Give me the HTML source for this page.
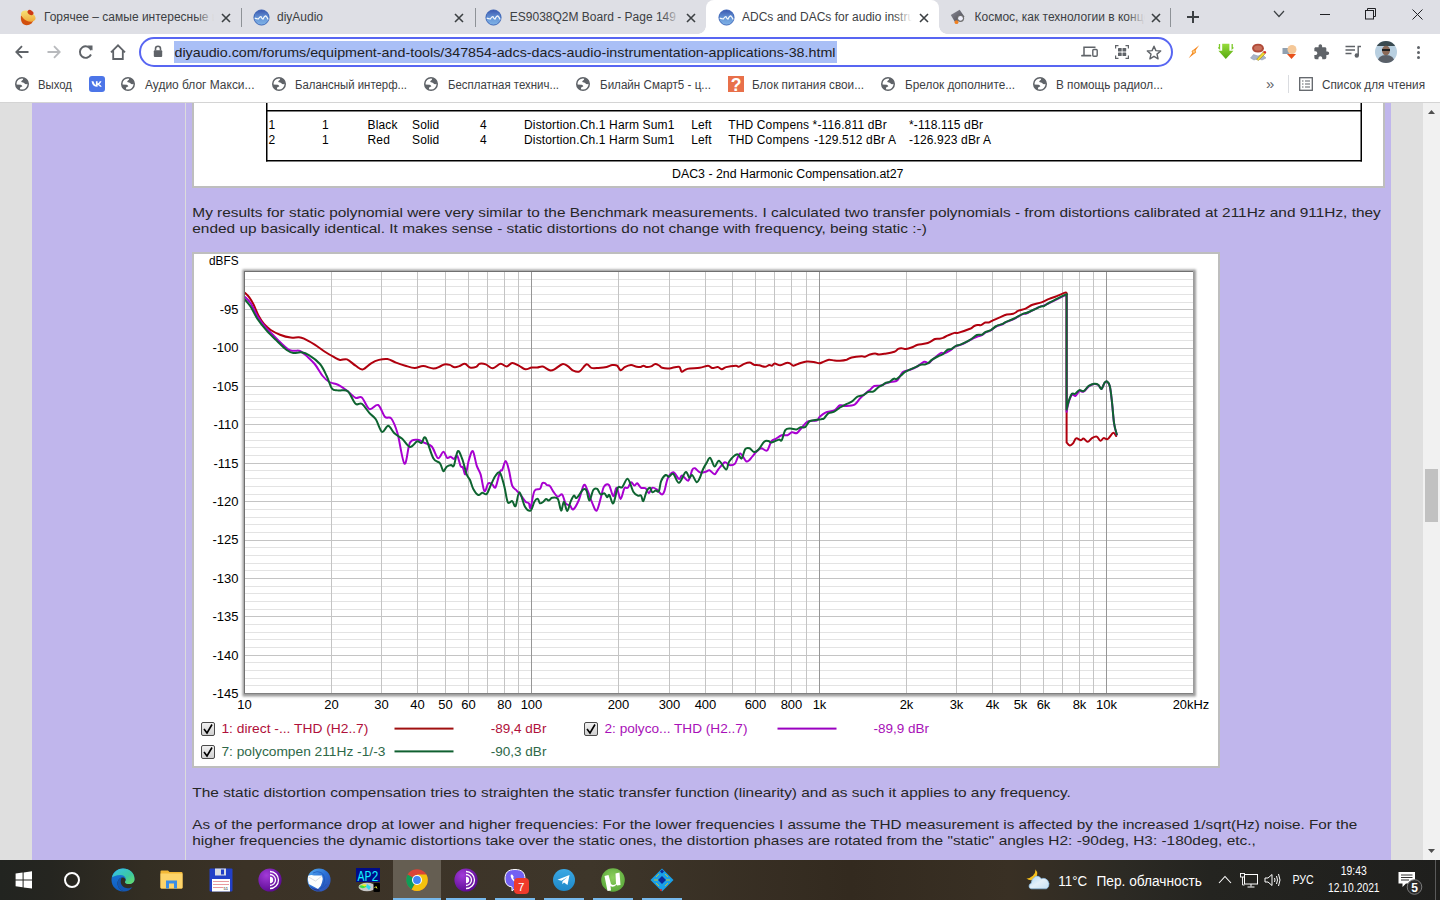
<!DOCTYPE html>
<html><head><meta charset="utf-8"><style>
*{margin:0;padding:0;box-sizing:border-box}
html,body{width:1440px;height:900px;overflow:hidden;background:#fff;font-family:"Liberation Sans",sans-serif}
.abs{position:absolute}
#ov{position:absolute;left:0;top:0}
#ov text{font-family:"Liberation Sans",sans-serif;white-space:pre}
</style></head><body>
<div class="abs" style="left:0;top:0;width:1440px;height:34px;background:#dedfe5"></div>
<div class="abs" style="left:0;top:34px;width:1440px;height:68px;background:#fff"></div>
<div class="abs" style="left:8.5px;top:0;width:233px;height:34px">
<svg class="abs" style="left:11px;top:8.5px" width="17" height="17" viewBox="0 0 17 17"><defs><linearGradient id="cf" x1="0" y1="0" x2="1" y2="1"><stop offset="0" stop-color="#f8ec80"/><stop offset="1" stop-color="#eea030"/></linearGradient></defs><path d="M1 6.5Q0.3 13 3.5 15.3Q7.5 17.3 11.5 14.5L13.5 11.5Z" fill="#d2500e"/><ellipse cx="8.3" cy="7.2" rx="7.8" ry="4.8" transform="rotate(28 8.3 7.2)" fill="url(#cf)"/><ellipse cx="10.5" cy="3.6" rx="3.2" ry="2.3" transform="rotate(32 10.5 3.6)" fill="#cc3a14"/></svg>
<div class="abs" style="left:35.5px;top:7px;width:170px;height:20px;overflow:hidden;font-size:12px;line-height:20px;white-space:nowrap;color:#3c4043">Горячее – самые интересные и</div>
<div class="abs" style="left:187.5px;top:7px;width:18px;height:20px;background:linear-gradient(90deg,rgba(222,225,230,0),#dedfe5)"></div>
<svg class="abs" style="left:212px;top:13px" width="10" height="10" viewBox="0 0 10 10"><path d="M1 1L9 9M9 1L1 9" stroke="#3c4043" stroke-width="1.6"/></svg>
</div>
<div class="abs" style="left:241.5px;top:0;width:233px;height:34px">
<svg class="abs" style="left:11px;top:8.5px" width="17" height="17" viewBox="0 0 17 17"><defs><linearGradient id="g1" x1="0" y1="0" x2="0" y2="1"><stop offset="0" stop-color="#3a58b0"/><stop offset="0.55" stop-color="#6898d8"/><stop offset="1" stop-color="#80b2e6"/></linearGradient></defs><circle cx="8.5" cy="8.5" r="7.6" fill="url(#g1)" stroke="#2a56ae" stroke-width="0.8"/><path d="M1.7 9.1Q3.5 9.6 5.3 10Q6.8 7.4 7.9 7.6Q9 10.2 9.95 10.2Q11.5 6.6 12.8 6.8Q14 8 15.2 10.5" stroke="#f4f8fc" stroke-width="1.2" fill="none"/></svg>
<div class="abs" style="left:35.5px;top:7px;width:170px;height:20px;overflow:hidden;font-size:12px;line-height:20px;white-space:nowrap;color:#3c4043">diyAudio</div>
<svg class="abs" style="left:212px;top:13px" width="10" height="10" viewBox="0 0 10 10"><path d="M1 1L9 9M9 1L1 9" stroke="#3c4043" stroke-width="1.6"/></svg>
</div>
<div class="abs" style="left:474.3px;top:0;width:233px;height:34px">
<svg class="abs" style="left:11px;top:8.5px" width="17" height="17" viewBox="0 0 17 17"><defs><linearGradient id="g2" x1="0" y1="0" x2="0" y2="1"><stop offset="0" stop-color="#3a58b0"/><stop offset="0.55" stop-color="#6898d8"/><stop offset="1" stop-color="#80b2e6"/></linearGradient></defs><circle cx="8.5" cy="8.5" r="7.6" fill="url(#g2)" stroke="#2a56ae" stroke-width="0.8"/><path d="M1.7 9.1Q3.5 9.6 5.3 10Q6.8 7.4 7.9 7.6Q9 10.2 9.95 10.2Q11.5 6.6 12.8 6.8Q14 8 15.2 10.5" stroke="#f4f8fc" stroke-width="1.2" fill="none"/></svg>
<div class="abs" style="left:35.5px;top:7px;width:170px;height:20px;overflow:hidden;font-size:12px;line-height:20px;white-space:nowrap;color:#3c4043">ES9038Q2M Board - Page 149 - diyAudio</div>
<div class="abs" style="left:187.5px;top:7px;width:18px;height:20px;background:linear-gradient(90deg,rgba(222,225,230,0),#dedfe5)"></div>
<svg class="abs" style="left:212px;top:13px" width="10" height="10" viewBox="0 0 10 10"><path d="M1 1L9 9M9 1L1 9" stroke="#3c4043" stroke-width="1.6"/></svg>
</div>
<div class="abs" style="left:706.5px;top:0;width:233px;height:34px">
<div class="abs" style="left:-0.5px;top:0;width:233px;height:34px;background:#fff;border-radius:8px 8px 0 0"></div>
<div class="abs" style="left:-8.5px;top:26px;width:8px;height:8px;background:radial-gradient(circle at 0 0,#dedfe5 7.5px,#fff 8px)"></div>
<div class="abs" style="left:232.5px;top:26px;width:8px;height:8px;background:radial-gradient(circle at 100% 0,#dedfe5 7.5px,#fff 8px)"></div>
<svg class="abs" style="left:11px;top:8.5px" width="17" height="17" viewBox="0 0 17 17"><defs><linearGradient id="g3" x1="0" y1="0" x2="0" y2="1"><stop offset="0" stop-color="#3a58b0"/><stop offset="0.55" stop-color="#6898d8"/><stop offset="1" stop-color="#80b2e6"/></linearGradient></defs><circle cx="8.5" cy="8.5" r="7.6" fill="url(#g3)" stroke="#2a56ae" stroke-width="0.8"/><path d="M1.7 9.1Q3.5 9.6 5.3 10Q6.8 7.4 7.9 7.6Q9 10.2 9.95 10.2Q11.5 6.6 12.8 6.8Q14 8 15.2 10.5" stroke="#f4f8fc" stroke-width="1.2" fill="none"/></svg>
<div class="abs" style="left:35.5px;top:7px;width:170px;height:20px;overflow:hidden;font-size:12px;line-height:20px;white-space:nowrap;color:#3c4043">ADCs and DACs for audio instrumentation</div>
<div class="abs" style="left:187.5px;top:7px;width:18px;height:20px;background:linear-gradient(90deg,rgba(255,255,255,0),#fff)"></div>
<svg class="abs" style="left:212px;top:13px" width="10" height="10" viewBox="0 0 10 10"><path d="M1 1L9 9M9 1L1 9" stroke="#3c4043" stroke-width="1.6"/></svg>
</div>
<div class="abs" style="left:939.0px;top:0;width:233px;height:34px">
<svg class="abs" style="left:11px;top:9px" width="17" height="17" viewBox="0 0 17 17"><defs><linearGradient id="kf" x1="0" y1="0" x2="1" y2="1"><stop offset="0" stop-color="#8a8a94"/><stop offset="1" stop-color="#44444e"/></linearGradient></defs><path d="M0.8 6L9.6 0.8L14.5 7.8L5.5 14Z" fill="url(#kf)"/><circle cx="10.5" cy="9.3" r="3.6" fill="#707070"/><circle cx="10.5" cy="9.3" r="2.4" fill="#eeeefa"/><circle cx="6.5" cy="13.2" r="1.9" fill="#f08020"/></svg>
<div class="abs" style="left:35.5px;top:7px;width:170px;height:20px;overflow:hidden;font-size:12px;line-height:20px;white-space:nowrap;color:#3c4043">Космос, как технологии в конце</div>
<div class="abs" style="left:187.5px;top:7px;width:18px;height:20px;background:linear-gradient(90deg,rgba(222,225,230,0),#dedfe5)"></div>
<svg class="abs" style="left:212px;top:13px" width="10" height="10" viewBox="0 0 10 10"><path d="M1 1L9 9M9 1L1 9" stroke="#3c4043" stroke-width="1.6"/></svg>
</div>
<div class="abs" style="left:241px;top:8px;width:1px;height:19px;background:#8e9297"></div>
<div class="abs" style="left:475px;top:8px;width:1px;height:19px;background:#8e9297"></div>
<div class="abs" style="left:1170px;top:8px;width:1px;height:19px;background:#8e9297"></div>
<svg class="abs" style="left:1186px;top:10px" width="14" height="14" viewBox="0 0 14 14"><path d="M7 1V13M1 7H13" stroke="#3c4043" stroke-width="2"/></svg>
<svg class="abs" style="left:1273px;top:10px" width="12" height="8" viewBox="0 0 12 8"><path d="M1 1L6 6.5L11 1" stroke="#3c4043" stroke-width="1.2" fill="none"/></svg>
<div class="abs" style="left:1320px;top:14px;width:10px;height:1px;background:#202124"></div>
<svg class="abs" style="left:1365px;top:8px" width="12" height="12" viewBox="0 0 12 12"><rect x="0.5" y="2.5" width="8" height="8.5" fill="none" stroke="#202124" stroke-width="1"/><path d="M2.5 2.5V0.5H10.5V8.5H8.5" fill="none" stroke="#202124" stroke-width="1"/></svg>
<svg class="abs" style="left:1412px;top:8.5px" width="11" height="11" viewBox="0 0 11 11"><path d="M0.5 0.5L10.5 10.5M10.5 0.5L0.5 10.5" stroke="#202124" stroke-width="1"/></svg>
<svg class="abs" style="left:15px;top:45px" width="14" height="14" viewBox="0 0 14 14"><path d="M13.5 7H1.5M7 1.2L1.3 7L7 12.8" stroke="#5f6368" stroke-width="1.8" fill="none"/></svg>
<svg class="abs" style="left:47px;top:45px" width="14" height="14" viewBox="0 0 14 14"><path d="M0.5 7H12.5M7 1.2L12.7 7L7 12.8" stroke="#b8babd" stroke-width="1.8" fill="none"/></svg>
<svg class="abs" style="left:78px;top:44px" width="16" height="16" viewBox="0 0 16 16"><path d="M13.2 6.2A5.8 5.8 0 1 0 13 10.5" stroke="#5f6368" stroke-width="1.9" fill="none"/><path d="M9.5 1.5L14.5 1.5L14.5 6.5Z" fill="#5f6368"/></svg>
<svg class="abs" style="left:110px;top:44px" width="16" height="16" viewBox="0 0 16 16"><path d="M1 8.3L8 1.3L15 8.3M3.2 6.5V15H12.8V6.5" stroke="#5f6368" stroke-width="1.8" fill="none" stroke-linejoin="miter"/></svg>
<div class="abs" style="left:139px;top:37px;width:1034px;height:30px;border:2px solid #5866f2;border-radius:15px;background:#fff"></div>
<svg class="abs" style="left:153px;top:45px" width="10" height="13" viewBox="0 0 10 13"><path d="M2.5 5.5V3.8A2.5 2.5 0 0 1 7.5 3.8V5.5" stroke="#5f6368" stroke-width="1.6" fill="none"/><rect x="0.8" y="5.3" width="8.4" height="6.8" rx="1" fill="#5f6368"/></svg>
<div class="abs" style="left:174px;top:41px;width:663px;height:22px;background:#a9bff6"></div>
<svg class="abs" style="left:1081px;top:46px" width="17" height="11" viewBox="0 0 17 11"><path d="M3 9V1.2H14.5" stroke="#5f6368" stroke-width="1.5" fill="none"/><path d="M1 9.7H9.5" stroke="#5f6368" stroke-width="1.8" stroke-linecap="round"/><rect x="11.8" y="3.5" width="4.4" height="6.8" rx="1" stroke="#5f6368" stroke-width="1.4" fill="none"/></svg>
<svg class="abs" style="left:1115px;top:45px" width="14" height="14" viewBox="0 0 14 14"><path d="M0.6 3.5V0.6H3.5M10.5 0.6H13.4V3.5M13.4 10.5V13.4H10.5M3.5 13.4H0.6V10.5" stroke="#5f6368" stroke-width="1.2" fill="none"/><rect x="3" y="3" width="3.7" height="3.6" rx="0.5" fill="#5f6368"/><rect x="7.5" y="3" width="3.7" height="3.6" rx="0.5" fill="#5f6368"/><rect x="3" y="7.5" width="3.7" height="3.6" rx="0.5" fill="#5f6368"/><rect x="7.5" y="7.5" width="3.7" height="3.6" rx="0.5" fill="#5f6368"/></svg>
<svg class="abs" style="left:1146px;top:45px" width="16" height="15" viewBox="0 0 16 15"><path d="M8 1.2L9.9 5.6L14.7 6L11 9.1L12.1 13.8L8 11.3L3.9 13.8L5 9.1L1.3 6L6.1 5.6Z" stroke="#5f6368" stroke-width="1.4" fill="none" stroke-linejoin="round"/></svg>
<svg class="abs" style="left:1188px;top:45px" width="12" height="14" viewBox="0 0 12 14"><path d="M11.2 0.3L7.5 5.5L8.2 7.2L0.6 13.2L4.2 8L3.6 6.3Z" fill="#f5871f"/><circle cx="5.9" cy="6.7" r="1.9" fill="#f8a848"/><circle cx="5.9" cy="6.7" r="0.9" fill="#fbd090"/></svg>
<svg class="abs" style="left:1217px;top:43px" width="18" height="17" viewBox="0 0 18 17"><defs><linearGradient id="ga" x1="0" y1="0" x2="0" y2="1"><stop offset="0" stop-color="#96dc3a"/><stop offset="1" stop-color="#56a810"/></linearGradient></defs><path d="M5.2 0.8H12.4V7.8H16.4L8.8 16L1.4 7.8H5.2Z" fill="url(#ga)"/><path d="M2.5 1V5.5L1.3 4.5M15.2 1V5.5L16.4 4.5" stroke="#7cc828" stroke-width="1.3" fill="none"/></svg>
<svg class="abs" style="left:1250px;top:43px" width="17" height="18" viewBox="0 0 17 18"><path d="M0.5 15L3.5 11.5L8 13L12.5 11.5L16 15L12 17L8 15.5L4 17Z" fill="#a8b4c8" stroke="#8894a8" stroke-width="0.5"/><path d="M2 5Q3 0.8 8 0.8Q13.5 0.8 14 5.5Q13.5 9.5 8 9.5Q2.5 9.5 2 5Z" fill="#b04a38"/><ellipse cx="8" cy="5" rx="4" ry="2.6" fill="#c8705c"/><path d="M6.5 16.5L13.5 8.5L15.5 10.5L8.5 17.5Z" fill="#f0d830" stroke="#706020" stroke-width="0.4"/><circle cx="14.8" cy="9.2" r="1.3" fill="#d83030"/></svg>
<svg class="abs" style="left:1282px;top:44px" width="15" height="16" viewBox="0 0 15 16"><rect x="0.5" y="4" width="7" height="6" fill="#90a0b0"/><circle cx="10" cy="5.5" r="4.5" fill="#f5c898"/><path d="M5 10H14L9.5 15Z" fill="#e8501a"/></svg>
<svg class="abs" style="left:1314.3px;top:44px" width="15.5" height="15.5" viewBox="1.5 0.5 22 22"><path d="M20.5 11H19V7c0-1.1-.9-2-2-2h-4V3.5C13 2.12 11.88 1 10.5 1S8 2.12 8 3.5V5H4c-1.1 0-1.99.9-1.99 2v3.8H3.5c1.49 0 2.7 1.21 2.7 2.7s-1.21 2.7-2.7 2.7H2V20c0 1.1.9 2 2 2h3.8v-1.5c0-1.490 1.21-2.7 2.7-2.7 1.49 0 2.7 1.21 2.7 2.7V22H17c1.1 0 2-.9 2-2v-4h1.5c1.38 0 2.5-1.12 2.5-2.5S21.880 11 20.5 11z" fill="#5f6368"/></svg>
<svg class="abs" style="left:1345px;top:45px" width="17" height="13" viewBox="0 0 17 13"><path d="M0.5 1.5H10M0.5 5H10M0.5 8.5H6.5" stroke="#5f6368" stroke-width="1.5"/><path d="M13.2 10.5V1.5H16" stroke="#5f6368" stroke-width="1.4" fill="none"/><circle cx="11.8" cy="10.5" r="2.2" fill="#5f6368"/></svg>
<svg class="abs" style="left:1375px;top:41px" width="22" height="22" viewBox="0 0 22 22"><defs><clipPath id="av"><circle cx="11" cy="11" r="11"/></clipPath></defs><g clip-path="url(#av)"><rect width="22" height="22" fill="#b8cfe0"/><rect width="22" height="5" fill="#3a4a50"/><ellipse cx="11" cy="9.5" rx="4" ry="4.8" fill="#8a6a58"/><rect x="7" y="8" width="8" height="2" fill="#202020"/><path d="M2 22Q3 14 11 14Q19 14 20 22Z" fill="#5a6068"/></g></svg>
<div class="abs" style="left:1416.8px;top:45.8px;width:3.4px;height:3.4px;border-radius:50%;background:#5f6368"></div>
<div class="abs" style="left:1416.8px;top:50.6px;width:3.4px;height:3.4px;border-radius:50%;background:#5f6368"></div>
<div class="abs" style="left:1416.8px;top:55.5px;width:3.4px;height:3.4px;border-radius:50%;background:#5f6368"></div>
<svg class="abs" style="left:15px;top:77px" width="14" height="14" viewBox="0 0 14 14"><circle cx="7" cy="7" r="6.25" fill="#fff" stroke="#5f6368" stroke-width="1.5"/><path d="M6.2 4.7Q6.8 3.3 7.8 3L8.4 0.9Q12.6 2 13.2 6.6Q11.5 7.4 10.2 7Q9.3 5.8 6.2 5.1Z" fill="#5f6368"/><path d="M0.8 7.5L5.7 7.7Q7.4 8.3 7.3 9.4Q5.4 9.9 5.1 10.8L4.8 13Q1.2 11.3 0.8 7.5Z" fill="#5f6368"/></svg>
<div class="abs" style="left:89px;top:76px;width:16px;height:16px;border-radius:3px;background:#4c75e8"></div><svg class="abs" style="left:89px;top:76px" width="16" height="16" viewBox="0 0 16 16"><path d="M2.5 5.3H4.4Q5.3 8.5 6.9 9V5.3H8.6V7.4Q10 7.2 10.8 5.3H12.5Q11.7 7.5 10.2 8.2Q11.9 9 12.8 10.8H11Q10 9 8.6 8.9V10.8H8.2Q3.5 10.8 2.5 5.3Z" fill="#fff"/></svg>
<svg class="abs" style="left:121px;top:77px" width="14" height="14" viewBox="0 0 14 14"><circle cx="7" cy="7" r="6.25" fill="#fff" stroke="#5f6368" stroke-width="1.5"/><path d="M6.2 4.7Q6.8 3.3 7.8 3L8.4 0.9Q12.6 2 13.2 6.6Q11.5 7.4 10.2 7Q9.3 5.8 6.2 5.1Z" fill="#5f6368"/><path d="M0.8 7.5L5.7 7.7Q7.4 8.3 7.3 9.4Q5.4 9.9 5.1 10.8L4.8 13Q1.2 11.3 0.8 7.5Z" fill="#5f6368"/></svg>
<svg class="abs" style="left:272px;top:77px" width="14" height="14" viewBox="0 0 14 14"><circle cx="7" cy="7" r="6.25" fill="#fff" stroke="#5f6368" stroke-width="1.5"/><path d="M6.2 4.7Q6.8 3.3 7.8 3L8.4 0.9Q12.6 2 13.2 6.6Q11.5 7.4 10.2 7Q9.3 5.8 6.2 5.1Z" fill="#5f6368"/><path d="M0.8 7.5L5.7 7.7Q7.4 8.3 7.3 9.4Q5.4 9.9 5.1 10.8L4.8 13Q1.2 11.3 0.8 7.5Z" fill="#5f6368"/></svg>
<svg class="abs" style="left:424px;top:77px" width="14" height="14" viewBox="0 0 14 14"><circle cx="7" cy="7" r="6.25" fill="#fff" stroke="#5f6368" stroke-width="1.5"/><path d="M6.2 4.7Q6.8 3.3 7.8 3L8.4 0.9Q12.6 2 13.2 6.6Q11.5 7.4 10.2 7Q9.3 5.8 6.2 5.1Z" fill="#5f6368"/><path d="M0.8 7.5L5.7 7.7Q7.4 8.3 7.3 9.4Q5.4 9.9 5.1 10.8L4.8 13Q1.2 11.3 0.8 7.5Z" fill="#5f6368"/></svg>
<svg class="abs" style="left:576px;top:77px" width="14" height="14" viewBox="0 0 14 14"><circle cx="7" cy="7" r="6.25" fill="#fff" stroke="#5f6368" stroke-width="1.5"/><path d="M6.2 4.7Q6.8 3.3 7.8 3L8.4 0.9Q12.6 2 13.2 6.6Q11.5 7.4 10.2 7Q9.3 5.8 6.2 5.1Z" fill="#5f6368"/><path d="M0.8 7.5L5.7 7.7Q7.4 8.3 7.3 9.4Q5.4 9.9 5.1 10.8L4.8 13Q1.2 11.3 0.8 7.5Z" fill="#5f6368"/></svg>
<div class="abs" style="left:728px;top:76px;width:16px;height:16px;background:#e8704a"></div>
<svg class="abs" style="left:881px;top:77px" width="14" height="14" viewBox="0 0 14 14"><circle cx="7" cy="7" r="6.25" fill="#fff" stroke="#5f6368" stroke-width="1.5"/><path d="M6.2 4.7Q6.8 3.3 7.8 3L8.4 0.9Q12.6 2 13.2 6.6Q11.5 7.4 10.2 7Q9.3 5.8 6.2 5.1Z" fill="#5f6368"/><path d="M0.8 7.5L5.7 7.7Q7.4 8.3 7.3 9.4Q5.4 9.9 5.1 10.8L4.8 13Q1.2 11.3 0.8 7.5Z" fill="#5f6368"/></svg>
<svg class="abs" style="left:1033px;top:77px" width="14" height="14" viewBox="0 0 14 14"><circle cx="7" cy="7" r="6.25" fill="#fff" stroke="#5f6368" stroke-width="1.5"/><path d="M6.2 4.7Q6.8 3.3 7.8 3L8.4 0.9Q12.6 2 13.2 6.6Q11.5 7.4 10.2 7Q9.3 5.8 6.2 5.1Z" fill="#5f6368"/><path d="M0.8 7.5L5.7 7.7Q7.4 8.3 7.3 9.4Q5.4 9.9 5.1 10.8L4.8 13Q1.2 11.3 0.8 7.5Z" fill="#5f6368"/></svg>
<div class="abs" style="left:1288px;top:75px;width:1px;height:18px;background:#dadce0"></div>
<svg class="abs" style="left:1299px;top:77px" width="14" height="14" viewBox="0 0 14 14"><rect x="0.7" y="0.7" width="12.6" height="12.6" stroke="#5f6368" stroke-width="1.3" fill="none"/><path d="M3 4H4.5M6 4H11M3 7H4.5M6 7H11M3 10H4.5M6 10H11" stroke="#5f6368" stroke-width="1.2"/></svg>
<div class="abs" style="left:0;top:102px;width:1440px;height:1px;background:#d4d4d4"></div>
<div class="abs" style="left:0;top:860px;width:1440px;height:40px;background:linear-gradient(90deg,#222420 0%,#252520 3.5%,#332e23 10%,#3b3226 17%,#3e362a 41%,#332a1f 59%,#393024 70%,#2c2a24 78%,#242420 84%,#1f1f1d 100%)"></div>
<div class="abs" style="left:393px;top:860px;width:48px;height:40px;background:#655e52"></div>
<div class="abs" style="left:393px;top:898px;width:48px;height:2px;background:#76b9ed"></div>
<div class="abs" style="left:446px;top:898px;width:40px;height:2px;background:#76b9ed"></div>
<div class="abs" style="left:495px;top:898px;width:40px;height:2px;background:#76b9ed"></div>
<div class="abs" style="left:544px;top:898px;width:40px;height:2px;background:#76b9ed"></div>
<div class="abs" style="left:593px;top:898px;width:40px;height:2px;background:#76b9ed"></div>
<div class="abs" style="left:642px;top:898px;width:40px;height:2px;background:#76b9ed"></div>
<svg class="abs" style="left:15px;top:871px" width="18" height="18" viewBox="0 0 18 18"><path d="M0.6 2.6L7.6 1.6V8.4H0.6Z M8.6 1.45L17 0.3V8.4H8.6Z M0.6 9.4H7.6V16.3L0.6 15.3Z M8.6 9.4H17V17.6L8.6 16.4Z" fill="#fff"/></svg>
<div class="abs" style="left:64px;top:872px;width:16px;height:16px;border-radius:50%;border:2px solid #fff"></div>
<svg class="abs" style="left:111px;top:868px" width="24" height="24" viewBox="0 0 24 24"><defs><linearGradient id="ed1" x1="0" y1="0" x2="1" y2="1"><stop offset="0" stop-color="#36c0f0"/><stop offset="0.6" stop-color="#3cc8a0"/><stop offset="1" stop-color="#6ee060"/></linearGradient><linearGradient id="ed2" x1="0" y1="0" x2="0" y2="1"><stop offset="0" stop-color="#1a78d8"/><stop offset="1" stop-color="#0f5cc0"/></linearGradient></defs><path d="M12 0.5C18.5 0.5 23.5 5 23.5 11C23.5 14.5 21 16 18 16C14 16 13.5 14 14.5 13C15.5 12 14 9 11 9.5C6 10.5 5 17 9 21C10.5 22.5 12 23 13 23.5C6 24 0.5 18.5 0.5 12C0.5 5.5 5.5 0.5 12 0.5Z" fill="url(#ed2)"/><path d="M1 9C3 3.5 7 0.5 12 0.5C18.5 0.5 23.5 5 23.5 11C23.5 14.5 21 16 18 16C14 16 13.5 14 14.5 13C15.5 12 15 7 9.5 7C5 7 2 9 1 9Z" fill="url(#ed1)"/><path d="M9 21C5 17 6 10.5 11 9.5C9 12 9 17 13.5 19.5C16.5 21 20 20 21.5 19C19.5 22 16 23.5 13 23.5C12 23 10.5 22.5 9 21Z" fill="#1456b0"/></svg>
<svg class="abs" style="left:160px;top:870px" width="23" height="19" viewBox="0 0 23 19"><path d="M0.5 1.5Q0.5 0.5 1.5 0.5H8L9.5 2H21.5Q22.5 2 22.5 3V17.5Q22.5 18.5 21.5 18.5H1.5Q0.5 18.5 0.5 17.5Z" fill="#f3b836"/><path d="M0.5 3.5H22.5V17.5Q22.5 18.5 21.5 18.5H1.5Q0.5 18.5 0.5 17.5Z" fill="#fdd46a"/><path d="M6 18.5V10.5H17V18.5H14V13.5H9V18.5Z" fill="#3a8ee6"/></svg>
<svg class="abs" style="left:209px;top:868px" width="24" height="24" viewBox="0 0 24 24"><rect x="0.5" y="0.5" width="23" height="23" rx="1" fill="#2240c8"/><rect x="6" y="0.5" width="11" height="7" fill="#d8dce4"/><rect x="12" y="1.5" width="3" height="5" fill="#2240c8"/><rect x="3" y="11" width="18" height="12.5" fill="#fff"/><path d="M4 13.5H20M4 16.5H20M4 19.5H14" stroke="#e89aa0" stroke-width="1.2"/><text x="19" y="22" font-size="4" fill="#000" text-anchor="end">51</text></svg>
<svg class="abs" style="left:258px;top:868px" width="24" height="24" viewBox="0 0 24 24"><defs><radialGradient id="tor270" cx="35%" cy="30%" r="75%"><stop offset="0" stop-color="#a23ad8"/><stop offset="1" stop-color="#5a0a90"/></radialGradient></defs><circle cx="12" cy="12" r="11.6" fill="url(#tor270)"/><path d="M12 3.5A8.5 8.5 0 0 1 12 20.5M12 6.5A5.5 5.5 0 0 1 12 17.5M12 9.5A2.5 2.5 0 0 1 12 14.5" stroke="#fff" stroke-width="1.3" fill="none"/><path d="M12 9.5A2.5 2.5 0 0 1 12 14.5Z" fill="#fff"/></svg>
<svg class="abs" style="left:454px;top:868px" width="24" height="24" viewBox="0 0 24 24"><defs><radialGradient id="tor466" cx="35%" cy="30%" r="75%"><stop offset="0" stop-color="#a23ad8"/><stop offset="1" stop-color="#5a0a90"/></radialGradient></defs><circle cx="12" cy="12" r="11.6" fill="url(#tor466)"/><path d="M12 3.5A8.5 8.5 0 0 1 12 20.5M12 6.5A5.5 5.5 0 0 1 12 17.5M12 9.5A2.5 2.5 0 0 1 12 14.5" stroke="#fff" stroke-width="1.3" fill="none"/><path d="M12 9.5A2.5 2.5 0 0 1 12 14.5Z" fill="#fff"/></svg>
<svg class="abs" style="left:307px;top:868px" width="24" height="24" viewBox="0 0 24 24"><defs><linearGradient id="tb" x1="0" y1="0" x2="1" y2="1"><stop offset="0" stop-color="#5ab0f0"/><stop offset="0.5" stop-color="#2a70d8"/><stop offset="1" stop-color="#3048a8"/></linearGradient></defs><circle cx="12" cy="12" r="11.6" fill="url(#tb)"/><path d="M6 5Q10 2.5 14 4.5Q18 7 17.5 13Q17 18 13 21Q17 20 19.5 16" stroke="#1a50b0" stroke-width="1" fill="none" opacity="0.6"/><path d="M1 8Q4 6.5 7 7.5L15 7.5Q16.5 11 15 14.5Q14 19 11 21L1.8 16Q0.5 12 1 8Z" fill="#fdfdfc"/><path d="M1.5 9L8.5 13L15 8" stroke="#c8ccd4" stroke-width="0.7" fill="none"/><path d="M3 18Q7 22 11 21L13 22.5Q7 24 3 18Z" fill="#2a3890"/></svg>
<div class="abs" style="left:356px;top:868px;width:24px;height:14px;background:#000c88"></div>
<svg class="abs" style="left:358px;top:882px" width="22" height="10" viewBox="0 0 22 10"><ellipse cx="9" cy="5" rx="8.5" ry="4.2" fill="#c8c8c8"/><path d="M1.5 4Q5 2 9 4.5L6 6Q3 6.5 1.5 5Z" fill="#40e040"/><path d="M3 3Q6 1.5 9 3L7 4.5Z" fill="#f0f020"/><path d="M9 2L13 5L11 8L8 5Z" fill="#30d8f0"/><rect x="15.5" y="1" width="6.5" height="9" rx="1" fill="#000"/><path d="M16.5 6L18 4.5L19 6.5" stroke="#e0e030" stroke-width="1" fill="none"/></svg>
<svg class="abs" style="left:406px;top:869px" width="22" height="22" viewBox="0 0 22 22"><circle cx="11" cy="11" r="10.8" fill="#db4437"/><path d="M11 11L1.6 5.6A10.8 10.8 0 0 0 5.6 20.4Z" fill="#0f9d58"/><path d="M11 11L5.6 20.4A10.8 10.8 0 0 0 21.8 11Z" fill="#f4c20d"/><path d="M11 11L21.8 11A10.8 10.8 0 0 0 20.4 5.6L11 5.6Z" fill="#f4c20d"/><circle cx="11" cy="11" r="5" fill="#fff"/><circle cx="11" cy="11" r="3.9" fill="#4285f4"/></svg>
<svg class="abs" style="left:503px;top:868px" width="24" height="24" viewBox="0 0 24 24"><path d="M12 1.5C19 1.5 22 4.5 22 11C22 17 19 19.5 13 19.5L9 23V19Q2 18 2 11C2 4.5 5 1.5 12 1.5Z" fill="#7360f2" stroke="#fff" stroke-width="1"/><path d="M8 6.5Q7 7.5 8.5 10.5Q11 14.5 14.5 15Q15.5 15 16 14L14.5 12.5L13 13Q11 12 10 10L10.8 9L9.5 6.8Z" fill="#fff"/></svg>
<div class="abs" style="left:513.5px;top:878px;width:15.5px;height:16px;border-radius:4px;background:#f03a2a"></div>
<svg class="abs" style="left:552.5px;top:869px" width="22" height="22" viewBox="0 0 22 22"><defs><linearGradient id="tg" x1="0" y1="0" x2="0" y2="1"><stop offset="0" stop-color="#3aa8e4"/><stop offset="1" stop-color="#1e88c8"/></linearGradient></defs><circle cx="11" cy="11" r="11" fill="url(#tg)"/><path d="M4.5 10.8L16.5 6L14.5 16L11 13.5L9.3 15.2L9.5 12.3L14.5 8L8.5 11.8Z" fill="#fff"/></svg>
<svg class="abs" style="left:601px;top:868px" width="24" height="24" viewBox="0 0 24 24"><defs><radialGradient id="ut" cx="50%" cy="40%" r="60%"><stop offset="0" stop-color="#8ed060"/><stop offset="1" stop-color="#5aa83a"/></radialGradient></defs><circle cx="12" cy="12" r="11.8" fill="url(#ut)"/><path d="M3.5 8L7.5 7L10 16Q12 18 15 16L14.5 5.5L18.5 4.5L19.5 17L16 17.5L15.8 16.5Q12 20 9.5 18L10 22.5L6.5 23Z" fill="#fff"/></svg>
<svg class="abs" style="left:650px;top:868px" width="24" height="24" viewBox="0 0 24 24"><path d="M12 0.5L23.5 12L12 23.5L0.5 12Z" fill="#1aa0e8"/><path d="M12 8L16 12L12 16L8 12Z" fill="#0a2a9a"/><path d="M6 9L9 6M15 6L18 9M6 15L9 18M15 18L18 15M4 12H8M16 12H20" stroke="#d8c820" stroke-width="0.9"/><path d="M12 1.5L14 3.5L12 5.5L10 3.5Z" fill="#0a2a9a"/><circle cx="11" cy="22" r="1" fill="#e02020"/></svg>
<svg class="abs" style="left:1026px;top:869px" width="24" height="21" viewBox="0 0 24 21"><defs><mask id="mm"><rect width="24" height="21" fill="#fff"/><circle cx="0" cy="0" r="9.63" fill="#000"/></mask><linearGradient id="cl" x1="0" y1="0" x2="1" y2="1"><stop offset="0" stop-color="#a8d4f4"/><stop offset="0.5" stop-color="#e4f0f8"/><stop offset="1" stop-color="#c4e0f4"/></linearGradient></defs><circle cx="5" cy="5" r="6.23" fill="#f6c01a" mask="url(#mm)"/><path d="M5.5 19.8Q2.9 19.6 3 17Q3.2 14.8 5.2 14.3Q5.2 9.8 9.8 7.2Q13.5 6.5 15.3 9.8Q16.5 9 19 9.5Q22.2 10.6 23 14.5Q23.3 18.6 20.3 19.8Z" fill="url(#cl)" stroke="#88b8e0" stroke-width="0.7"/></svg>
<svg class="abs" style="left:1218px;top:875px" width="14" height="9" viewBox="0 0 14 9"><path d="M1 8L7 1.5L13 8" stroke="#fff" stroke-width="1.1" fill="none"/></svg>
<svg class="abs" style="left:1240px;top:873px" width="18" height="15" viewBox="0 0 18 15"><rect x="4.5" y="1.5" width="13" height="9.5" fill="none" stroke="#fff" stroke-width="1"/><path d="M11 11V13.5M7.5 14H14.5" stroke="#fff" stroke-width="1"/><rect x="0.5" y="0.5" width="4" height="3.5" fill="#222" stroke="#fff" stroke-width="0.9"/><path d="M2.5 4V12H4.5" stroke="#fff" stroke-width="0.9" fill="none"/></svg>
<svg class="abs" style="left:1264px;top:873px" width="18" height="14" viewBox="0 0 18 14"><path d="M1 5H4L8 1.5V12.5L4 9H1Z" fill="none" stroke="#fff" stroke-width="1"/><path d="M10.5 5Q11.5 7 10.5 9M12.5 3Q14.5 7 12.5 11M14.5 1Q17.5 7 14.5 13" stroke="#fff" stroke-width="1" fill="none"/></svg>
<svg class="abs" style="left:1398px;top:871px" width="26" height="24" viewBox="0 0 26 24"><path d="M0.5 1H17V12.5H8L4.5 16V12.5H0.5Z" fill="#fff"/><path d="M3 4H14.5M3 6.5H14.5M3 9H11" stroke="#333" stroke-width="1"/><circle cx="16.5" cy="16" r="7.3" fill="#2a2a2a" stroke="#7a7a7a" stroke-width="1"/></svg>
<div class="abs" style="left:1435px;top:860px;width:1px;height:40px;background:#5a5a5a"></div>
<svg id="ov" width="1440" height="900" viewBox="0 0 1440 900"><text x="174.5" y="56.8" font-size="13.5" fill="#202124" textLength="661" lengthAdjust="spacingAndGlyphs">diyaudio.com/forums/equipment-and-tools/347854-adcs-dacs-audio-instrumentation-applications-38.html</text><text x="38" y="88.5" font-size="12.5" fill="#3c4043" textLength="34" lengthAdjust="spacingAndGlyphs">Выход</text><text x="145" y="88.5" font-size="12.5" fill="#3c4043" textLength="109.5" lengthAdjust="spacingAndGlyphs">Аудио блог Макси...</text><text x="295" y="88.5" font-size="12.5" fill="#3c4043" textLength="112" lengthAdjust="spacingAndGlyphs">Балансный интерф...</text><text x="448" y="88.5" font-size="12.5" fill="#3c4043" textLength="111" lengthAdjust="spacingAndGlyphs">Бесплатная технич...</text><text x="600" y="88.5" font-size="12.5" fill="#3c4043" textLength="111" lengthAdjust="spacingAndGlyphs">Билайн Смарт5 - ц...</text><text x="736" y="90.8" font-size="17.5" fill="#fff" text-anchor="middle" font-weight="bold">?</text><text x="752" y="88.5" font-size="12.5" fill="#3c4043" textLength="112" lengthAdjust="spacingAndGlyphs">Блок питания свои...</text><text x="905" y="88.5" font-size="12.5" fill="#3c4043" textLength="110" lengthAdjust="spacingAndGlyphs">Брелок дополните...</text><text x="1056" y="88.5" font-size="12.5" fill="#3c4043" textLength="107" lengthAdjust="spacingAndGlyphs">В помощь радиол...</text><text x="1266" y="89" font-size="15" fill="#5f6368">»</text><text x="1322" y="88.5" font-size="12.5" fill="#3c4043" textLength="103" lengthAdjust="spacingAndGlyphs">Список для чтения</text><rect x="0" y="103" width="1423" height="757" fill="#dfdfdf"/><rect x="32" y="103" width="1359" height="757" fill="#c0b6ec"/><rect x="185" y="103" width="1" height="757" fill="#dcdcdc"/><rect x="1423" y="103" width="17" height="757" fill="#f1f1f1"/><path d="M1428 114L1431.5 110L1435 114Z" fill="#505050"/><path d="M1428 849L1431.5 853L1435 849Z" fill="#505050"/><rect x="1425" y="469" width="13" height="53" fill="#c1c1c1"/><rect x="192" y="103" width="1193" height="85" fill="#bebebe"/><rect x="194" y="103" width="1189" height="83" fill="#fff"/><rect x="266" y="103" width="1.5" height="58.5" fill="#000"/><rect x="1360.5" y="103" width="1.5" height="58.5" fill="#000"/><rect x="266" y="110" width="1096" height="1.5" fill="#000"/><rect x="266" y="160" width="1096" height="1.5" fill="#000"/><text x="268.5" y="128.8" font-size="12" fill="#000" letter-spacing="0.15">1</text><text x="322" y="128.8" font-size="12" fill="#000" letter-spacing="0.15">1</text><text x="367.5" y="128.8" font-size="12" fill="#000" letter-spacing="0.15">Black</text><text x="412" y="128.8" font-size="12" fill="#000" letter-spacing="0.15">Solid</text><text x="480" y="128.8" font-size="12" fill="#000" letter-spacing="0.15">4</text><text x="524" y="128.8" font-size="12" fill="#000" letter-spacing="0.15">Distortion.Ch.1 Harm Sum1</text><text x="691.2" y="128.8" font-size="12" fill="#000" letter-spacing="0.15">Left</text><text x="728.2" y="128.8" font-size="12" fill="#000" letter-spacing="0.15">THD Compens</text><text x="812.6" y="128.8" font-size="12" fill="#000" letter-spacing="0.15">*-116.811 dBr</text><text x="909" y="128.8" font-size="12" fill="#000" letter-spacing="0.15">*-118.115 dBr</text><text x="268.5" y="143.8" font-size="12" fill="#000" letter-spacing="0.15">2</text><text x="322" y="143.8" font-size="12" fill="#000" letter-spacing="0.15">1</text><text x="367.5" y="143.8" font-size="12" fill="#000" letter-spacing="0.15">Red</text><text x="412" y="143.8" font-size="12" fill="#000" letter-spacing="0.15">Solid</text><text x="480" y="143.8" font-size="12" fill="#000" letter-spacing="0.15">4</text><text x="524" y="143.8" font-size="12" fill="#000" letter-spacing="0.15">Distortion.Ch.1 Harm Sum1</text><text x="691.2" y="143.8" font-size="12" fill="#000" letter-spacing="0.15">Left</text><text x="728.2" y="143.8" font-size="12" fill="#000" letter-spacing="0.15">THD Compens</text><text x="814" y="143.8" font-size="12" fill="#000" letter-spacing="0.15">-129.512 dBr A</text><text x="909" y="143.8" font-size="12" fill="#000" letter-spacing="0.15">-126.923 dBr A</text><text x="672" y="178" font-size="12" fill="#000" textLength="231.5" lengthAdjust="spacingAndGlyphs">DAC3 - 2nd Harmonic Compensation.at27</text><text x="192.3" y="217" font-size="13" fill="#262626" textLength="1188.5" lengthAdjust="spacingAndGlyphs">My results for static polynomial were very similar to the Benchmark measurements. I calculated two transfer polynomials - from distortions calibrated at 211Hz and 911Hz, they</text><text x="192.3" y="233" font-size="13" fill="#262626" textLength="734.5" lengthAdjust="spacingAndGlyphs">ended up basically identical. It makes sense - static distortions do not change with frequency, being static :-)</text><rect x="192" y="252" width="1028" height="516" fill="#bebebe"/><rect x="194" y="254" width="1024" height="512" fill="#fff"/><defs><filter id="sh" x="-5%" y="-5%" width="110%" height="110%"><feGaussianBlur stdDeviation="1.3"/></filter></defs><rect x="242.5" y="269.5" width="953.5" height="427.0" fill="#9c9c9c" filter="url(#sh)"/><rect x="244" y="271" width="949" height="422.5" fill="#fff"/><rect x="245" y="279" width="948" height="1" fill="#e3e3e3"/><rect x="245" y="286" width="948" height="1" fill="#e3e3e3"/><rect x="245" y="294" width="948" height="1" fill="#e3e3e3"/><rect x="245" y="302" width="948" height="1" fill="#e3e3e3"/><rect x="245" y="317" width="948" height="1" fill="#e3e3e3"/><rect x="245" y="325" width="948" height="1" fill="#e3e3e3"/><rect x="245" y="332" width="948" height="1" fill="#e3e3e3"/><rect x="245" y="340" width="948" height="1" fill="#e3e3e3"/><rect x="245" y="355" width="948" height="1" fill="#e3e3e3"/><rect x="245" y="363" width="948" height="1" fill="#e3e3e3"/><rect x="245" y="371" width="948" height="1" fill="#e3e3e3"/><rect x="245" y="378" width="948" height="1" fill="#e3e3e3"/><rect x="245" y="394" width="948" height="1" fill="#e3e3e3"/><rect x="245" y="401" width="948" height="1" fill="#e3e3e3"/><rect x="245" y="409" width="948" height="1" fill="#e3e3e3"/><rect x="245" y="417" width="948" height="1" fill="#e3e3e3"/><rect x="245" y="432" width="948" height="1" fill="#e3e3e3"/><rect x="245" y="440" width="948" height="1" fill="#e3e3e3"/><rect x="245" y="447" width="948" height="1" fill="#e3e3e3"/><rect x="245" y="455" width="948" height="1" fill="#e3e3e3"/><rect x="245" y="470" width="948" height="1" fill="#e3e3e3"/><rect x="245" y="478" width="948" height="1" fill="#e3e3e3"/><rect x="245" y="486" width="948" height="1" fill="#e3e3e3"/><rect x="245" y="494" width="948" height="1" fill="#e3e3e3"/><rect x="245" y="509" width="948" height="1" fill="#e3e3e3"/><rect x="245" y="517" width="948" height="1" fill="#e3e3e3"/><rect x="245" y="524" width="948" height="1" fill="#e3e3e3"/><rect x="245" y="532" width="948" height="1" fill="#e3e3e3"/><rect x="245" y="547" width="948" height="1" fill="#e3e3e3"/><rect x="245" y="555" width="948" height="1" fill="#e3e3e3"/><rect x="245" y="563" width="948" height="1" fill="#e3e3e3"/><rect x="245" y="570" width="948" height="1" fill="#e3e3e3"/><rect x="245" y="586" width="948" height="1" fill="#e3e3e3"/><rect x="245" y="593" width="948" height="1" fill="#e3e3e3"/><rect x="245" y="601" width="948" height="1" fill="#e3e3e3"/><rect x="245" y="609" width="948" height="1" fill="#e3e3e3"/><rect x="245" y="624" width="948" height="1" fill="#e3e3e3"/><rect x="245" y="632" width="948" height="1" fill="#e3e3e3"/><rect x="245" y="639" width="948" height="1" fill="#e3e3e3"/><rect x="245" y="647" width="948" height="1" fill="#e3e3e3"/><rect x="245" y="662" width="948" height="1" fill="#e3e3e3"/><rect x="245" y="670" width="948" height="1" fill="#e3e3e3"/><rect x="245" y="678" width="948" height="1" fill="#e3e3e3"/><rect x="245" y="685" width="948" height="1" fill="#e3e3e3"/><rect x="245" y="309" width="948" height="1" fill="#c4c4c4"/><rect x="245" y="348" width="948" height="1" fill="#c4c4c4"/><rect x="245" y="386" width="948" height="1" fill="#c4c4c4"/><rect x="245" y="424" width="948" height="1" fill="#c4c4c4"/><rect x="245" y="463" width="948" height="1" fill="#c4c4c4"/><rect x="245" y="501" width="948" height="1" fill="#c4c4c4"/><rect x="245" y="540" width="948" height="1" fill="#c4c4c4"/><rect x="245" y="578" width="948" height="1" fill="#c4c4c4"/><rect x="245" y="616" width="948" height="1" fill="#c4c4c4"/><rect x="245" y="655" width="948" height="1" fill="#c4c4c4"/><rect x="331" y="272" width="1" height="421.5" fill="#c4c4c4"/><rect x="381" y="272" width="1" height="421.5" fill="#c4c4c4"/><rect x="417" y="272" width="1" height="421.5" fill="#c4c4c4"/><rect x="445" y="272" width="1" height="421.5" fill="#c4c4c4"/><rect x="468" y="272" width="1" height="421.5" fill="#c4c4c4"/><rect x="487" y="272" width="1" height="421.5" fill="#c4c4c4"/><rect x="504" y="272" width="1" height="421.5" fill="#c4c4c4"/><rect x="518" y="272" width="1" height="421.5" fill="#c4c4c4"/><rect x="531" y="272" width="1" height="421.5" fill="#969696"/><rect x="618" y="272" width="1" height="421.5" fill="#c4c4c4"/><rect x="669" y="272" width="1" height="421.5" fill="#c4c4c4"/><rect x="705" y="272" width="1" height="421.5" fill="#c4c4c4"/><rect x="732" y="272" width="1" height="421.5" fill="#c4c4c4"/><rect x="755" y="272" width="1" height="421.5" fill="#c4c4c4"/><rect x="774" y="272" width="1" height="421.5" fill="#c4c4c4"/><rect x="791" y="272" width="1" height="421.5" fill="#c4c4c4"/><rect x="806" y="272" width="1" height="421.5" fill="#c4c4c4"/><rect x="819" y="272" width="1" height="421.5" fill="#969696"/><rect x="906" y="272" width="1" height="421.5" fill="#c4c4c4"/><rect x="956" y="272" width="1" height="421.5" fill="#c4c4c4"/><rect x="992" y="272" width="1" height="421.5" fill="#c4c4c4"/><rect x="1020" y="272" width="1" height="421.5" fill="#c4c4c4"/><rect x="1043" y="272" width="1" height="421.5" fill="#c4c4c4"/><rect x="1062" y="272" width="1" height="421.5" fill="#c4c4c4"/><rect x="1079" y="272" width="1" height="421.5" fill="#c4c4c4"/><rect x="1093" y="272" width="1" height="421.5" fill="#c4c4c4"/><rect x="1106" y="272" width="1" height="421.5" fill="#969696"/><rect x="244" y="271" width="1" height="422.5" fill="#707070"/><rect x="244" y="271" width="949" height="1" fill="#707070"/><rect x="244" y="693.0" width="949" height="1" fill="#808080"/><text x="209" y="264.5" font-size="12.5" fill="#000" textLength="29.5" lengthAdjust="spacingAndGlyphs">dBFS</text><text x="238.5" y="314.01000000000005" font-size="13" fill="#000" text-anchor="end">-95</text><text x="238.5" y="352.42" font-size="13" fill="#000" text-anchor="end">-100</text><text x="238.5" y="390.83000000000004" font-size="13" fill="#000" text-anchor="end">-105</text><text x="238.5" y="429.24" font-size="13" fill="#000" text-anchor="end">-110</text><text x="238.5" y="467.65000000000003" font-size="13" fill="#000" text-anchor="end">-115</text><text x="238.5" y="506.06000000000006" font-size="13" fill="#000" text-anchor="end">-120</text><text x="238.5" y="544.47" font-size="13" fill="#000" text-anchor="end">-125</text><text x="238.5" y="582.88" font-size="13" fill="#000" text-anchor="end">-130</text><text x="238.5" y="621.2900000000001" font-size="13" fill="#000" text-anchor="end">-135</text><text x="238.5" y="659.7" font-size="13" fill="#000" text-anchor="end">-140</text><text x="238.5" y="698.11" font-size="13" fill="#000" text-anchor="end">-145</text><text x="244.5" y="709" font-size="13" fill="#000" text-anchor="middle">10</text><text x="331.5" y="709" font-size="13" fill="#000" text-anchor="middle">20</text><text x="381.5" y="709" font-size="13" fill="#000" text-anchor="middle">30</text><text x="417.5" y="709" font-size="13" fill="#000" text-anchor="middle">40</text><text x="445.5" y="709" font-size="13" fill="#000" text-anchor="middle">50</text><text x="468.5" y="709" font-size="13" fill="#000" text-anchor="middle">60</text><text x="504.5" y="709" font-size="13" fill="#000" text-anchor="middle">80</text><text x="531.5" y="709" font-size="13" fill="#000" text-anchor="middle">100</text><text x="618.5" y="709" font-size="13" fill="#000" text-anchor="middle">200</text><text x="669.5" y="709" font-size="13" fill="#000" text-anchor="middle">300</text><text x="705.5" y="709" font-size="13" fill="#000" text-anchor="middle">400</text><text x="755.5" y="709" font-size="13" fill="#000" text-anchor="middle">600</text><text x="791.5" y="709" font-size="13" fill="#000" text-anchor="middle">800</text><text x="819.5" y="709" font-size="13" fill="#000" text-anchor="middle">1k</text><text x="906.5" y="709" font-size="13" fill="#000" text-anchor="middle">2k</text><text x="956.5" y="709" font-size="13" fill="#000" text-anchor="middle">3k</text><text x="992.5" y="709" font-size="13" fill="#000" text-anchor="middle">4k</text><text x="1020.5" y="709" font-size="13" fill="#000" text-anchor="middle">5k</text><text x="1043.5" y="709" font-size="13" fill="#000" text-anchor="middle">6k</text><text x="1079.5" y="709" font-size="13" fill="#000" text-anchor="middle">8k</text><text x="1106.5" y="709" font-size="13" fill="#000" text-anchor="middle">10k</text><text x="1172.7" y="709" font-size="13" fill="#000" textLength="36.5" lengthAdjust="spacingAndGlyphs">20kHz</text><defs><clipPath id="plotclip"><rect x="245" y="272" width="948" height="421.0"/></clipPath></defs><g fill="none" stroke-width="2.0" stroke-linejoin="round" stroke-linecap="round" clip-path="url(#plotclip)"><path d="M244.7,292.7C245.5,293.5 247.9,295.4 249.3,297.3C250.7,299.2 251.7,300.9 253.3,304.0C254.9,307.1 256.9,312.7 258.7,316.0C260.5,319.3 262.0,321.7 264.0,324.0C266.0,326.3 268.0,328.2 270.7,330.0C273.4,331.8 276.7,333.4 280.0,334.7C283.3,336.0 287.6,337.2 290.7,337.6C293.8,338.0 296.5,337.1 298.7,337.3C300.9,337.5 301.3,337.5 304.0,338.7C306.7,339.9 311.1,342.5 314.7,344.7C318.2,346.9 322.2,350.0 325.3,352.0C328.4,354.0 330.9,355.4 333.3,356.7C335.8,358.0 337.7,359.4 340.0,359.9C342.3,360.3 344.4,358.4 347.0,359.4C349.6,360.4 353.0,364.0 355.6,365.7C358.2,367.4 360.0,369.9 362.6,369.5C365.2,369.1 368.4,364.9 371.1,363.3C373.8,361.7 376.2,360.6 378.9,359.9C381.6,359.2 384.5,358.6 387.4,359.0C390.2,359.4 393.0,361.5 396.0,362.6C399.0,363.7 402.2,364.8 405.3,365.7C408.4,366.6 411.7,367.9 414.7,368.0C417.7,368.1 420.1,366.0 423.2,366.1C426.3,366.2 430.5,368.4 433.3,368.5C436.1,368.6 438.2,367.2 440.0,366.5C441.8,365.8 442.6,364.7 444.2,364.4C445.8,364.1 448.0,364.4 449.7,364.9C451.4,365.4 453.0,367.0 454.6,367.2C456.2,367.4 457.7,366.7 459.4,366.1C461.1,365.5 463.2,363.5 465.0,363.8C466.8,364.0 468.0,367.0 469.9,367.5C471.8,368.0 474.5,367.5 476.1,366.9C477.7,366.3 478.0,364.2 479.6,363.8C481.2,363.3 483.6,363.6 485.8,364.4C488.0,365.2 490.4,368.4 492.8,368.3C495.2,368.2 498.1,364.1 500.4,363.8C502.7,363.4 504.7,366.6 506.7,366.5C508.7,366.4 510.1,363.1 512.2,363.0C514.3,362.9 517.0,364.8 519.2,365.8C521.4,366.9 523.3,369.0 525.4,369.3C527.5,369.6 529.7,367.8 531.7,367.5C533.7,367.2 535.4,367.7 537.2,367.5C539.1,367.3 540.7,366.0 542.8,366.5C544.9,367.0 547.9,369.8 549.7,370.3C551.6,370.8 551.8,370.7 553.9,369.7C556.0,368.7 559.9,364.8 562.2,364.2C564.5,363.6 565.9,365.0 567.8,366.1C569.6,367.2 571.3,369.8 573.3,370.7C575.3,371.6 577.4,372.5 579.6,371.4C581.8,370.3 584.5,364.8 586.5,364.2C588.5,363.6 589.4,367.3 591.4,367.9C593.4,368.5 595.8,368.1 598.3,367.9C600.8,367.7 604.4,367.4 606.7,366.9C609.0,366.4 610.5,365.3 612.2,365.1C613.9,364.9 615.7,364.7 617.1,365.6C618.5,366.5 619.3,370.0 620.6,370.3C621.9,370.6 623.0,368.1 624.7,367.2C626.4,366.3 629.1,365.2 631.0,365.1C632.9,365.0 634.3,366.2 635.8,366.5C637.3,366.8 638.7,367.2 640.0,367.1C641.3,367.0 642.4,365.7 643.5,365.7C644.6,365.7 645.6,367.0 646.9,367.1C648.2,367.2 649.7,366.9 651.1,366.4C652.5,365.9 653.9,364.0 655.3,363.9C656.7,363.8 658.2,365.0 659.4,365.7C660.5,366.4 660.6,367.3 662.2,367.8C663.8,368.3 666.4,368.7 669.2,368.5C672.0,368.3 676.8,366.2 678.9,366.7C681.0,367.2 680.3,371.3 681.7,371.7C683.1,372.1 684.2,369.5 687.2,368.9C690.2,368.2 696.2,368.3 699.7,367.8C703.2,367.3 706.0,365.6 708.1,365.7C710.2,365.8 710.6,367.9 712.2,368.1C713.8,368.3 716.2,366.9 717.8,367.1C719.4,367.3 720.5,369.2 721.9,369.2C723.3,369.2 723.8,367.7 726.1,367.1C728.4,366.5 733.7,365.8 735.8,365.7C737.9,365.6 737.2,367.0 738.6,366.7C740.0,366.4 742.4,364.6 744.2,363.9C746.1,363.2 748.1,362.5 749.7,362.6C751.3,362.7 752.3,364.2 753.9,364.7C755.5,365.1 757.5,364.9 759.4,365.3C761.2,365.7 763.4,366.9 765.0,366.8C766.6,366.8 768.1,365.2 769.2,365.0C770.4,364.8 771.0,365.9 771.9,365.7C772.8,365.5 773.3,363.7 774.7,363.6C776.1,363.5 778.3,365.4 780.3,365.3C782.3,365.2 784.9,363.2 786.5,362.9C788.1,362.6 788.8,362.8 790.0,363.3C791.2,363.8 791.9,365.7 793.5,365.7C795.1,365.7 797.5,364.0 799.7,363.3C801.9,362.6 804.4,361.7 806.7,361.5C809.0,361.3 811.5,361.6 813.6,361.9C815.7,362.2 817.6,363.3 819.2,363.3C820.8,363.3 821.7,362.5 823.3,361.9C824.9,361.3 827.0,359.9 828.9,359.7C830.8,359.5 832.5,360.4 834.4,360.6C836.2,360.8 838.0,361.0 840.0,360.8C842.0,360.6 844.8,360.2 846.7,359.7C848.7,359.1 849.2,358.1 851.7,357.5C854.2,356.9 859.5,356.4 861.7,356.3C863.9,356.2 863.6,357.0 865.0,356.7C866.4,356.4 868.3,355.0 870.0,354.5C871.7,354.0 873.6,353.5 875.1,353.5C876.6,353.5 877.2,354.4 878.7,354.5C880.2,354.6 881.8,354.3 884.4,353.8C887.0,353.3 892.2,352.5 894.5,351.7C896.8,350.9 897.0,349.4 898.2,348.8C899.4,348.2 900.5,348.1 901.8,348.2C903.1,348.2 904.2,349.3 906.1,349.1C908.0,348.9 911.4,347.5 913.3,346.8C915.2,346.1 915.3,345.4 917.7,344.8C920.1,344.2 924.9,344.0 927.8,343.0C930.7,342.0 933.1,339.7 935.0,339.0C936.9,338.3 938.0,338.9 939.3,338.7C940.6,338.5 941.4,338.4 942.9,337.9C944.4,337.3 946.1,336.2 948.0,335.4C949.9,334.6 952.8,333.3 954.5,332.9C956.2,332.5 955.5,333.6 958.1,332.9C960.7,332.2 967.3,329.9 970.0,328.8C972.7,327.6 972.9,326.6 974.2,326.0C975.5,325.4 976.5,325.0 977.6,324.9C978.8,324.8 979.8,325.5 981.1,325.1C982.4,324.7 984.0,322.9 985.3,322.5C986.6,322.1 987.5,322.9 988.8,322.5C990.0,322.1 991.2,321.2 992.9,320.4C994.6,319.6 996.9,318.6 999.2,317.6C1001.5,316.6 1004.5,315.1 1006.8,314.5C1009.1,313.9 1011.1,314.4 1013.1,313.8C1015.1,313.2 1016.5,311.6 1018.6,310.7C1020.7,309.8 1023.3,309.6 1025.6,308.6C1027.9,307.6 1029.8,305.8 1032.5,304.8C1035.2,303.8 1038.7,303.4 1041.5,302.4C1044.3,301.4 1046.7,299.9 1049.2,298.9C1051.8,297.8 1054.2,297.2 1056.8,296.1C1059.4,295.1 1063.5,293.1 1065.1,292.6C1066.7,292.1 1066.3,293.2 1066.6,293.3M1066.6,293.3L1066.6,442.4M1066.6,442.4C1067.1,442.9 1068.7,445.3 1069.8,445.5C1070.9,445.7 1072.0,444.6 1073.0,443.4C1074.0,442.2 1074.8,438.9 1076.1,438.4C1077.4,437.9 1079.7,440.3 1080.9,440.3C1082.1,440.3 1082.4,438.1 1083.5,438.4C1084.6,438.6 1086.3,441.9 1087.7,441.8C1089.1,441.8 1090.5,439.0 1092.0,438.1C1093.5,437.2 1095.3,436.2 1096.7,436.6C1098.1,437.1 1099.2,440.6 1100.4,440.8C1101.6,441.1 1102.4,438.4 1103.6,438.1C1104.8,437.8 1106.2,439.9 1107.8,439.0C1109.4,438.1 1111.7,433.4 1113.1,432.9C1114.5,432.4 1115.7,435.5 1116.2,436.0" stroke="#b0000e"/><path d="M244.7,296.7C245.7,297.8 248.6,300.1 250.7,303.3C252.8,306.5 255.1,312.3 257.3,316.0C259.5,319.7 261.3,322.1 264.0,325.3C266.7,328.5 270.4,332.3 273.3,335.3C276.2,338.3 278.6,340.9 281.3,343.3C284.0,345.8 287.1,348.8 289.3,350.0C291.5,351.2 292.9,350.5 294.7,350.7C296.5,350.9 298.0,350.1 300.0,351.0C302.0,351.9 304.2,353.8 306.7,356.0C309.1,358.2 312.0,360.7 314.7,364.0C317.4,367.3 320.3,373.0 322.7,376.0C325.1,379.0 327.1,380.7 329.3,382.0C331.5,383.3 334.2,383.4 336.0,384.0C337.8,384.6 338.0,384.7 340.0,385.9C342.0,387.1 345.2,389.3 347.8,391.3C350.4,393.3 353.3,396.9 355.6,397.9C357.9,398.9 359.5,395.6 361.8,397.5C364.1,399.4 366.8,407.9 369.5,409.2C372.2,410.4 375.5,403.7 378.1,405.0C380.7,406.3 382.9,414.8 385.1,417.0C387.3,419.2 389.2,415.8 391.3,418.5C393.4,421.2 395.3,425.8 397.5,433.3C399.7,440.8 402.4,462.1 404.5,463.6C406.6,465.2 407.8,446.6 410.0,442.6C412.2,438.6 415.5,439.8 417.8,439.8C420.1,439.8 421.7,441.5 424.0,442.6C426.3,443.7 429.5,443.9 431.8,446.5C434.1,449.1 436.1,457.3 438.0,458.2C439.9,459.1 441.8,451.8 443.3,451.7C444.8,451.6 446.0,457.0 447.2,457.8C448.4,458.6 449.5,456.5 450.6,456.7C451.7,456.9 452.8,459.1 453.9,458.9C455.0,458.7 456.1,454.4 457.2,455.6C458.3,456.8 459.7,464.2 460.6,466.1C461.5,468.0 462.0,465.8 462.8,467.2C463.6,468.6 464.6,475.6 465.6,474.4C466.6,473.2 467.7,463.9 468.9,460.0C470.1,456.1 471.5,450.2 472.8,451.1C474.1,452.0 475.4,461.7 476.7,465.6C478.0,469.5 479.3,470.1 480.6,474.4C481.9,478.6 483.1,489.6 484.4,491.1C485.7,492.6 487.0,484.4 488.3,483.3C489.6,482.2 491.0,483.8 492.2,484.4C493.4,485.0 494.3,489.3 495.6,487.2C496.9,485.1 498.9,474.6 500.0,471.7C501.1,468.8 501.3,471.8 502.2,470.0C503.1,468.2 504.5,461.1 505.6,461.1C506.7,461.1 507.8,465.9 508.9,470.0C510.0,474.1 510.9,482.2 512.2,485.6C513.5,489.0 515.2,488.9 516.7,490.6C518.2,492.3 519.6,493.8 521.1,495.6C522.6,497.5 524.3,500.4 525.6,501.7C526.9,503.0 528.1,502.3 528.9,503.3C529.7,504.3 529.7,509.8 530.6,507.8C531.5,505.8 532.8,494.2 534.4,491.1C536.0,488.0 538.7,490.2 540.0,488.9C541.3,487.6 541.4,484.3 542.2,483.3C543.0,482.3 544.2,482.8 545.0,483.1C545.8,483.4 545.9,484.5 546.7,485.0C547.5,485.5 548.9,485.0 550.0,486.1C551.1,487.2 552.0,489.9 553.3,491.7C554.6,493.5 556.3,496.2 557.8,496.7C559.3,497.1 560.9,493.3 562.2,494.4C563.5,495.5 564.3,501.4 565.6,503.3C566.9,505.2 568.7,504.6 570.0,505.6C571.3,506.6 571.8,510.3 573.3,509.4C574.8,508.5 577.1,504.1 578.9,500.0C580.7,495.9 582.4,486.5 583.9,485.0C585.4,483.5 586.4,488.1 587.8,491.1C589.2,494.1 590.7,499.6 592.2,502.8C593.7,506.1 595.2,511.6 596.7,510.6C598.2,509.6 599.9,500.7 601.1,496.7C602.3,492.7 602.6,488.6 603.9,486.7C605.2,484.8 607.3,483.4 608.9,485.0C610.5,486.6 612.0,495.6 613.3,496.1C614.6,496.6 615.5,487.3 616.7,487.8C617.9,488.3 619.3,498.8 620.6,498.9C621.9,499.0 623.2,490.1 624.4,488.3C625.6,486.5 626.7,488.8 627.8,487.8C628.9,486.8 630.0,482.6 631.1,482.2C632.2,481.8 633.4,485.4 634.4,485.6C635.4,485.8 636.1,482.9 637.2,483.3C638.3,483.7 639.7,487.0 641.1,487.8C642.5,488.6 644.3,487.4 645.6,488.3C646.9,489.2 647.8,493.4 648.9,493.3C650.0,493.2 650.9,488.5 652.2,487.8C653.5,487.1 655.1,488.3 656.7,489.4C658.3,490.5 660.4,494.1 661.7,494.4C663.0,494.7 663.4,493.8 664.4,491.1C665.4,488.4 666.3,481.5 667.8,478.3C669.3,475.1 671.4,472.1 673.3,472.2C675.1,472.3 677.4,478.3 678.9,478.9C680.4,479.5 680.6,475.3 682.2,475.6C683.8,475.9 686.6,481.5 688.3,480.6C690.0,479.7 691.1,472.1 692.2,470.0C693.3,467.9 693.7,467.9 695.0,468.3C696.3,468.7 698.2,471.8 700.0,472.4C701.8,473.0 704.2,472.1 705.8,471.7C707.4,471.3 708.0,469.8 709.5,470.2C711.0,470.6 713.1,474.4 714.6,474.3C716.1,474.2 716.5,471.5 718.2,469.5C719.9,467.5 723.0,462.9 724.8,462.2C726.6,461.5 727.5,464.9 729.2,465.1C730.9,465.3 733.2,465.6 735.0,463.6C736.8,461.7 738.1,453.8 740.1,453.4C742.1,453.0 744.6,461.0 746.7,461.5C748.8,462.0 750.9,458.0 752.5,456.4C754.1,454.8 754.6,453.4 756.1,452.0C757.6,450.6 759.5,448.6 761.3,448.3C763.1,448.1 765.4,451.7 767.1,450.5C768.8,449.3 770.0,442.9 771.5,441.0C773.0,439.1 774.1,439.9 775.8,438.9C777.5,437.9 779.8,435.8 781.7,435.2C783.7,434.6 785.8,435.7 787.5,435.2C789.2,434.7 790.3,432.7 791.9,432.3C793.5,431.9 795.3,433.9 797.0,433.0C798.7,432.1 800.3,429.1 802.1,427.2C803.9,425.3 805.5,422.5 807.9,421.4C810.3,420.3 814.8,421.3 816.7,420.6C818.7,419.9 818.2,418.3 819.6,417.0C821.0,415.7 823.0,413.7 825.4,412.6C827.8,411.5 831.8,411.6 834.2,410.4C836.6,409.2 838.1,406.0 840.0,405.3C841.9,404.6 843.4,406.1 845.8,406.0C848.2,405.9 852.2,405.9 854.6,404.6C857.0,403.3 858.2,400.2 860.4,398.0C862.6,395.8 866.1,392.9 867.7,391.5C869.3,390.1 868.9,390.8 870.0,389.9C871.1,389.0 872.5,386.7 874.3,386.0C876.1,385.3 879.0,386.0 880.8,385.6C882.6,385.2 883.8,384.2 885.2,383.6C886.7,383.0 887.8,382.6 889.5,382.2C891.2,381.8 893.9,381.8 895.3,381.3C896.7,380.9 896.7,381.1 898.0,379.5C899.3,377.9 901.2,373.5 903.2,371.9C905.2,370.3 907.5,370.7 909.7,369.9C911.9,369.1 913.8,368.5 916.2,367.2C918.6,365.9 922.2,362.5 924.2,361.8C926.2,361.1 927.2,363.5 928.5,363.2C929.8,362.9 930.1,361.7 932.1,360.0C934.1,358.3 938.8,354.2 940.8,353.1C942.8,352.0 942.6,353.9 944.0,353.5C945.4,353.1 947.4,352.1 949.4,350.9C951.4,349.7 954.0,347.2 955.9,346.2C957.8,345.2 958.6,345.7 961.0,344.7C963.4,343.7 967.4,341.4 970.0,340.1C972.6,338.8 974.9,337.5 976.9,336.7C978.9,335.9 980.4,335.9 981.8,335.2C983.2,334.5 983.8,333.4 985.3,332.6C986.8,331.8 988.9,331.4 990.8,330.4C992.6,329.3 994.5,327.3 996.4,326.3C998.2,325.3 1000.3,325.2 1001.9,324.5C1003.5,323.8 1004.2,323.0 1006.1,322.1C1008.0,321.2 1010.3,320.7 1013.1,319.4C1015.9,318.1 1020.5,315.2 1022.8,314.2C1025.1,313.2 1024.1,314.5 1026.9,313.3C1029.7,312.1 1036.5,308.2 1039.4,306.9C1042.3,305.6 1042.7,306.1 1044.3,305.5C1045.9,304.9 1047.1,304.0 1049.2,303.0C1051.3,302.0 1054.0,300.7 1056.8,299.3C1059.6,297.9 1064.6,295.5 1066.2,294.8C1067.8,294.1 1066.5,295.0 1066.6,295.0M1066.6,295.0L1066.6,411.7M1066.6,411.7C1066.9,410.1 1067.8,405.0 1068.7,402.2C1069.6,399.4 1070.8,395.9 1071.9,394.8C1073.1,393.8 1074.4,396.5 1075.6,395.9C1076.8,395.3 1078.0,391.7 1079.3,391.0C1080.6,390.3 1081.9,392.5 1083.5,391.7C1085.1,390.9 1087.0,387.7 1088.8,386.4C1090.6,385.1 1092.5,384.2 1094.1,384.0C1095.7,383.8 1097.1,384.2 1098.3,385.0C1099.5,385.8 1100.5,389.4 1101.5,389.0C1102.5,388.6 1103.6,384.1 1104.6,382.9C1105.6,381.7 1106.4,381.2 1107.3,381.8C1108.2,382.4 1109.1,383.2 1109.9,386.6C1110.7,390.1 1111.3,396.3 1112.0,402.5C1112.7,408.7 1113.3,418.3 1114.1,423.7C1114.9,429.1 1116.3,432.8 1116.8,434.6" stroke="#a800d0"/><path d="M244.7,299.3C245.7,300.5 248.6,303.5 250.7,306.7C252.8,309.9 254.6,314.7 257.3,318.7C260.0,322.7 263.4,326.9 266.7,330.7C270.0,334.5 274.0,338.1 277.3,341.3C280.6,344.5 284.0,348.1 286.7,350.0C289.4,351.9 290.9,352.6 293.3,353.0C295.7,353.4 298.6,351.9 301.3,352.3C304.0,352.7 306.2,353.4 309.3,355.3C312.4,357.2 317.1,360.6 320.0,364.0C322.9,367.4 324.7,371.9 326.7,376.0C328.7,380.1 330.2,386.3 332.0,388.7C333.8,391.1 336.0,390.1 337.3,390.4C338.6,390.7 338.2,390.4 340.0,390.5C341.8,390.6 345.2,389.1 347.8,391.3C350.4,393.5 353.3,401.7 355.6,403.8C357.9,405.9 359.5,402.2 361.8,403.8C364.1,405.4 367.2,410.5 369.5,413.1C371.8,415.7 373.7,416.2 375.8,419.3C377.9,422.4 379.9,430.7 382.0,431.8C384.1,432.9 386.1,425.6 388.2,425.8C390.3,426.1 392.1,431.1 394.4,433.3C396.7,435.5 399.6,436.5 402.2,438.8C404.8,441.1 407.5,446.6 410.0,447.0C412.5,447.4 415.1,442.1 417.0,441.4C418.9,440.7 420.2,443.6 421.6,443.0C423.0,442.4 423.6,435.2 425.5,437.7C427.4,440.2 430.9,453.9 433.3,458.2C435.7,462.5 438.3,461.1 440.0,463.3C441.7,465.5 442.2,470.5 443.3,471.1C444.4,471.7 445.4,467.7 446.7,466.7C448.0,465.7 449.9,465.2 451.1,465.0C452.3,464.8 452.8,467.9 453.9,465.6C455.0,463.3 456.4,452.2 457.8,451.1C459.2,450.0 460.7,455.0 462.2,458.9C463.7,462.8 465.4,470.9 466.7,474.4C468.0,477.9 468.9,477.6 470.0,480.0C471.1,482.4 471.9,486.4 473.3,488.9C474.7,491.4 476.8,494.4 478.3,495.0C479.8,495.6 480.8,493.0 482.2,492.8C483.6,492.6 485.2,495.3 486.7,493.9C488.2,492.5 489.6,487.4 491.1,484.4C492.6,481.3 494.1,477.5 495.6,475.6C497.1,473.7 498.5,471.0 500.0,472.8C501.5,474.6 503.1,481.8 504.4,486.7C505.7,491.6 506.5,499.8 507.8,502.2C509.1,504.6 510.9,500.5 512.2,501.1C513.5,501.8 514.4,507.6 515.6,506.1C516.8,504.6 517.8,492.1 519.4,492.2C521.0,492.3 523.1,503.6 525.0,506.7C526.9,509.8 529.0,511.4 530.6,510.6C532.2,509.8 533.2,503.6 534.4,501.7C535.6,499.8 536.9,498.6 537.8,498.9C538.7,499.2 539.1,502.8 540.0,503.3C540.9,503.8 542.3,502.4 543.3,501.7C544.3,501.0 545.2,499.1 546.1,498.9C547.0,498.7 547.9,500.8 548.9,500.6C549.9,500.4 550.7,498.1 552.2,497.8C553.7,497.5 556.3,496.8 557.8,498.9C559.3,501.0 560.1,510.1 561.1,510.6C562.1,511.1 562.9,501.6 563.9,501.7C564.9,501.8 566.1,511.1 567.2,511.1C568.3,511.1 569.5,504.3 570.6,501.7C571.7,499.1 572.9,496.2 573.9,495.6C574.9,495.0 575.1,498.8 576.7,497.8C578.3,496.8 581.6,490.5 583.3,489.4C585.0,488.3 585.7,489.2 586.7,491.1C587.7,493.0 588.3,500.8 589.4,500.6C590.5,500.4 592.0,491.9 593.3,490.0C594.6,488.1 596.0,488.2 597.2,488.9C598.4,489.6 599.4,493.7 600.6,494.4C601.8,495.1 603.3,492.8 604.4,493.3C605.5,493.8 606.4,496.9 607.2,497.2C608.0,497.5 608.4,494.0 609.4,495.0C610.4,496.0 611.9,504.5 613.3,503.3C614.7,502.1 616.3,490.5 617.8,487.8C619.3,485.1 620.5,488.7 622.2,487.2C623.9,485.7 625.9,478.1 627.8,478.9C629.6,479.6 631.6,488.9 633.3,491.7C635.0,494.5 636.5,495.0 637.8,495.6C639.1,496.2 640.2,494.7 641.1,495.6C642.0,496.5 642.4,501.9 643.3,501.1C644.2,500.4 645.6,493.3 646.7,491.1C647.8,488.9 649.1,487.6 650.0,487.8C650.9,488.0 651.3,491.7 652.2,492.2C653.1,492.7 654.5,490.8 655.6,490.6C656.7,490.4 658.0,492.7 658.9,491.1C659.8,489.5 660.0,483.8 661.1,481.1C662.2,478.4 664.3,475.7 665.6,475.0C666.9,474.3 667.6,476.9 668.9,476.7C670.2,476.5 671.6,472.9 673.3,473.9C675.0,474.9 676.8,483.1 678.9,482.8C681.0,482.5 683.9,473.0 685.6,472.2C687.4,471.4 688.3,477.3 689.4,477.8C690.5,478.3 691.0,474.3 692.2,475.0C693.4,475.7 695.4,481.8 696.7,482.2C698.0,482.6 699.0,479.6 700.0,477.5C701.0,475.4 701.8,471.9 702.9,469.5C704.0,467.1 705.4,464.8 706.6,462.9C707.8,460.9 708.9,457.2 710.2,457.8C711.5,458.4 713.1,466.1 714.6,466.6C716.1,467.1 717.1,460.2 719.0,460.7C720.9,461.2 724.5,469.4 726.2,469.5C727.9,469.6 727.4,464.1 729.2,461.5C731.0,458.9 735.1,454.7 737.2,454.2C739.3,453.7 740.3,459.4 741.6,458.5C742.9,457.6 743.9,450.8 745.2,449.1C746.5,447.4 748.1,447.8 749.6,448.3C751.1,448.8 752.5,451.8 754.0,452.0C755.5,452.2 756.6,451.5 758.3,449.8C760.0,448.1 762.5,443.3 764.2,441.8C765.9,440.3 767.3,440.9 768.5,441.0C769.7,441.1 769.8,442.7 771.5,442.5C773.2,442.3 777.1,440.0 778.8,439.6C780.5,439.2 780.6,441.9 781.7,440.3C782.8,438.7 783.8,432.1 785.3,430.1C786.8,428.2 788.6,428.7 790.4,428.6C792.2,428.5 794.6,429.6 796.3,429.4C798.0,429.2 799.1,427.6 800.6,427.2C802.1,426.8 803.5,428.2 805.0,427.2C806.5,426.2 807.7,422.6 809.4,421.4C811.1,420.2 813.3,420.3 815.2,419.9C817.1,419.5 819.5,419.4 821.0,419.2C822.5,418.9 822.8,419.4 824.0,418.4C825.2,417.4 826.6,414.4 828.3,413.3C830.0,412.2 832.2,412.6 834.2,411.6C836.2,410.6 838.1,408.7 840.0,407.5C841.9,406.3 843.8,405.3 845.8,404.3C847.8,403.3 849.8,403.0 851.7,401.7C853.7,400.4 855.6,397.7 857.5,396.6C859.4,395.5 861.6,395.8 863.3,395.1C865.0,394.4 866.6,392.8 867.7,392.2C868.8,391.6 869.0,391.8 870.0,391.7C871.0,391.6 872.1,392.2 873.6,391.4C875.1,390.6 877.2,388.0 878.7,387.0C880.2,386.0 881.2,385.8 882.3,385.2C883.4,384.6 884.0,383.7 885.2,383.1C886.4,382.5 888.1,382.5 889.5,381.8C890.9,381.1 892.6,379.1 893.8,378.7C894.9,378.2 895.2,379.6 896.4,379.1C897.6,378.6 899.6,376.6 901.0,375.5C902.4,374.4 903.2,373.2 904.7,372.2C906.2,371.2 907.8,370.6 909.7,369.7C911.6,368.8 914.4,367.6 916.2,366.8C918.0,366.0 919.0,365.1 920.5,364.7C922.0,364.3 923.6,364.8 924.9,364.5C926.2,364.2 927.3,363.7 928.5,362.9C929.7,362.1 930.4,360.8 932.1,359.6C933.8,358.5 936.8,356.9 938.6,356.0C940.4,355.1 941.5,355.2 942.9,354.2C944.3,353.2 945.8,350.8 947.3,349.9C948.8,349.0 950.2,349.6 951.6,348.9C953.0,348.2 954.3,346.6 955.9,345.9C957.5,345.1 958.6,345.4 961.0,344.4C963.4,343.4 967.4,341.5 970.0,339.9C972.6,338.3 974.9,335.9 976.9,335.0C978.9,334.1 980.4,335.2 981.8,334.7C983.2,334.2 983.8,333.0 985.3,332.2C986.8,331.4 988.9,331.1 990.8,330.1C992.6,329.1 994.5,327.0 996.4,326.0C998.2,325.0 1000.3,324.9 1001.9,324.2C1003.5,323.5 1004.2,322.7 1006.1,321.8C1008.0,320.9 1010.3,320.3 1013.1,319.0C1015.9,317.7 1020.5,314.8 1022.8,313.8C1025.1,312.8 1024.1,313.9 1026.9,312.8C1029.7,311.7 1036.5,308.4 1039.4,307.2C1042.3,306.0 1042.7,306.6 1044.3,305.8C1045.9,305.1 1047.1,303.9 1049.2,302.7C1051.3,301.5 1054.0,300.3 1056.8,298.9C1059.6,297.5 1064.6,295.1 1066.2,294.4C1067.8,293.7 1066.5,294.6 1066.6,294.7M1066.6,294.7L1066.6,409.6M1066.6,409.6C1066.9,408.2 1067.8,403.8 1068.7,401.2C1069.6,398.6 1070.8,395.0 1071.9,393.8C1073.0,392.6 1073.9,394.4 1075.1,393.8C1076.3,393.2 1077.9,390.5 1079.3,390.1C1080.7,389.7 1081.9,391.9 1083.5,391.2C1085.1,390.5 1087.0,387.1 1088.8,385.9C1090.6,384.7 1092.5,384.0 1094.1,383.8C1095.7,383.6 1097.1,383.9 1098.3,384.8C1099.5,385.7 1100.5,389.4 1101.5,389.0C1102.5,388.6 1103.6,383.9 1104.6,382.7C1105.6,381.5 1106.4,381.0 1107.3,381.6C1108.2,382.2 1109.1,383.0 1109.9,386.4C1110.7,389.8 1111.3,396.0 1112.0,402.2C1112.7,408.4 1113.3,418.0 1114.1,423.4C1114.9,428.8 1116.3,432.6 1116.8,434.4" stroke="#0e6430"/></g><defs><linearGradient id="cbg" x1="0" y1="0" x2="0" y2="1"><stop offset="0" stop-color="#f2f2f2"/><stop offset="1" stop-color="#cfcfcf"/></linearGradient></defs><rect x="201.5" y="722.5" width="13" height="13" rx="1.5" fill="url(#cbg)" stroke="#4a4a4a" stroke-width="1"/><path d="M204 729L207 733L212 724.5" stroke="#000" stroke-width="1.6" fill="none"/><rect x="584.5" y="722.5" width="13" height="13" rx="1.5" fill="url(#cbg)" stroke="#4a4a4a" stroke-width="1"/><path d="M587 729L590 733L595 724.5" stroke="#000" stroke-width="1.6" fill="none"/><rect x="201.5" y="745.5" width="13" height="13" rx="1.5" fill="url(#cbg)" stroke="#4a4a4a" stroke-width="1"/><path d="M204 752L207 756L212 747.5" stroke="#000" stroke-width="1.6" fill="none"/><text x="221.4" y="733" font-size="12.5" fill="#b0103a" textLength="147" lengthAdjust="spacingAndGlyphs">1: direct -... THD (H2..7)</text><rect x="394.5" y="727.6" width="59" height="2" fill="#a01010"/><text x="490.8" y="733" font-size="12.5" fill="#b0103a" textLength="55.6" lengthAdjust="spacingAndGlyphs">-89,4 dBr</text><text x="604.5" y="733" font-size="12.5" fill="#a810b8" textLength="143" lengthAdjust="spacingAndGlyphs">2: polyco... THD (H2..7)</text><rect x="777.5" y="727.6" width="59" height="2" fill="#9a00c0"/><text x="873.5" y="733" font-size="12.5" fill="#a810b8" textLength="55.6" lengthAdjust="spacingAndGlyphs">-89,9 dBr</text><text x="221.4" y="756" font-size="12.5" fill="#2e6848" textLength="164" lengthAdjust="spacingAndGlyphs">7: polycompen 211Hz -1/-3</text><rect x="394.5" y="750.4" width="59" height="2" fill="#106030"/><text x="490.8" y="756" font-size="12.5" fill="#2e6848" textLength="55.6" lengthAdjust="spacingAndGlyphs">-90,3 dBr</text><text x="192.3" y="797" font-size="13" fill="#262626" textLength="878.5" lengthAdjust="spacingAndGlyphs">The static distortion compensation tries to straighten the static transfer function (linearity) and as such it applies to any frequency.</text><text x="192.3" y="829" font-size="13" fill="#262626" textLength="1165" lengthAdjust="spacingAndGlyphs">As of the performance drop at lower and higher frequencies: For the lower frequencies I assume the THD measurement is affected by the increased 1/sqrt(Hz) noise. For the</text><text x="192.3" y="845" font-size="13" fill="#262626" textLength="1063.5" lengthAdjust="spacingAndGlyphs">higher frequencies the dynamic distortions take over the static ones, the distortion phases are rotated from the &quot;static&quot; angles H2: -90deg, H3: -180deg, etc.,</text><text x="368" y="880.8" font-size="14" fill="#10f0ff" textLength="21" lengthAdjust="spacingAndGlyphs" text-anchor="middle" style="font-family:&quot;Liberation Mono&quot;">AP2</text><text x="521.2" y="891" font-size="11.5" fill="#fff" text-anchor="middle">7</text><text x="1058.3" y="886" font-size="14" fill="#fff" textLength="28.8" lengthAdjust="spacingAndGlyphs">11°C</text><text x="1096.4" y="886" font-size="14" fill="#fff" textLength="105.6" lengthAdjust="spacingAndGlyphs">Пер. облачность</text><text x="1292.5" y="884" font-size="12.5" fill="#fff" textLength="21.3" lengthAdjust="spacingAndGlyphs">РУС</text><text x="1340.8" y="874.8" font-size="12.5" fill="#fff" textLength="26" lengthAdjust="spacingAndGlyphs">19:43</text><text x="1328" y="892.4" font-size="12.5" fill="#fff" textLength="51.6" lengthAdjust="spacingAndGlyphs">12.10.2021</text><text x="1414.5" y="891.5" font-size="12" fill="#fff" text-anchor="middle" font-weight="bold">5</text></svg>
</body></html>
